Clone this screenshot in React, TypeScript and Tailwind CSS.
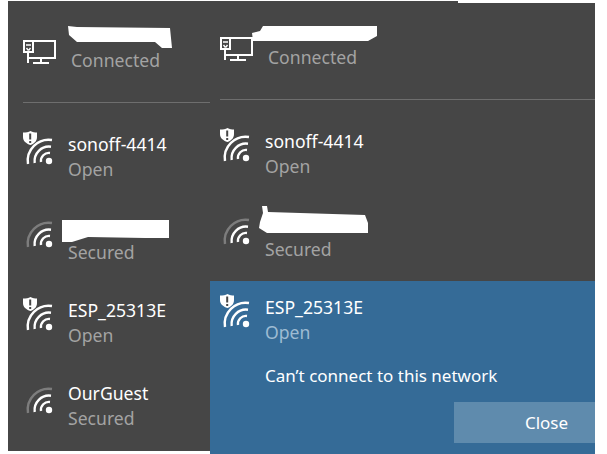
const FONT = "font-['Noto_Sans',sans-serif]";

function WifiIcon({ secured }: { secured?: boolean }) {
  // dot sits at 26,31; arcs run from just below left of it round to just right of the top
  return (
    <svg width="36" height="36" viewBox="0 0 36 36" fill="none" className="shrink-0">
      <path
        d="M5 34 A21 21 0 0 1 29 10"
        stroke={secured ? "#7d7d7d" : "#ffffff"}
        strokeWidth="2.4"
      />
      <path d="M11.7 33 A14.5 14.5 0 0 1 28 16.7" stroke="#ffffff" strokeWidth="2.4" />
      <path d="M18 32 A8 8 0 0 1 27 23" stroke="#ffffff" strokeWidth="2.4" />
      <circle cx="26" cy="31" r="3.2" fill="#ffffff" />
      {!secured && (
        <g transform="translate(0 1)">
          <path d="M0 1.5 C3 1.5 5.5 1 7.5 0 C9.5 1 12 1.5 14 1.5 V6 C14 10 11.5 12.5 7.5 14 C3 12.5 0 10 0 6 Z" fill="#ffffff" />
          <rect x="6.2" y="2.5" width="2" height="6" fill="#464646" />
          <rect x="6.2" y="10" width="2" height="2" fill="#464646" />
        </g>
      )}
    </svg>
  );
}

function MonitorIcon() {
  return (
    <svg width="33" height="24" viewBox="0 0 33 24" fill="none" stroke="#ffffff" strokeWidth="2" className="shrink-0">
      <path d="M10 1 H32 V18 H5" />
      <rect x="1" y="1" width="9" height="11" />
      <path d="M3 5 H8 M3.5 8 L5 10 H6 L7.5 8" strokeWidth="1.4" />
      <path d="M5 12 V23 M18 18 V23 M10 23 H26" />
    </svg>
  );
}

// hand-painted redaction scribble over the network name
function Blob({ w, h, points, className = "" }: { w: number; h: number; points: string; className?: string }) {
  return (
    <svg width={w} height={h} viewBox={`0 0 ${w} ${h}`} className={`block shrink-0 ${className}`}>
      <polygon points={points} fill="#ffffff" />
    </svg>
  );
}

function NetworkRow({
  name,
  status,
  blob,
  subClass = "text-[#a3a3a3]",
  secured,
  className = "",
}: {
  name?: string;
  status: string;
  blob?: React.ReactNode;
  subClass?: string;
  secured?: boolean;
  className?: string;
}) {
  return (
    <div className={`flex items-start gap-[9px] ${className}`}>
      <WifiIcon secured={secured} />
      <div className="pt-[2px]">
        {blob ?? <div className="text-[17.6px] leading-[25px] text-white">{name}</div>}
        <div className={`text-[17.6px] leading-[25px] ${subClass}`}>{status}</div>
      </div>
    </div>
  );
}

export default function App() {
  return (
    <div className={`${FONT} w-[607px] h-[454px] bg-white overflow-hidden flex items-start`}>
      {/* Left flyout */}
      <div className="ml-2 mt-px w-[202px] h-[450px] bg-[#464646] shrink-0">
        <div className="h-[101px] pl-[15px] flex items-start">
          <div className="mt-[39px]">
            <MonitorIcon />
          </div>
          <div className="ml-[12px] mt-[25px]">
            <Blob w={104} h={22} points="0,0 9,1 102,2 104,22 94,22 87,16 9,16 1,9" />
            <div className="ml-[3px] text-[17.6px] leading-[25px] text-[#a3a3a3]">Connected</div>
          </div>
        </div>
        <div className="ml-[15px] h-px bg-[#6e6e6e]" />
        <div className="pl-[15px] pt-[27px]">
          <NetworkRow name="sonoff-4414" status="Open" className="h-[83px]" />
          <NetworkRow
            blob={
              <Blob
                w={107}
                h={22}
                points="0,0 107,0 107,18 83,18 26,17 10,22 0,22"
                className="mt-[5px] -mb-[2px] -ml-[6px]"
              />
            }
            status="Secured"
            secured
            className="h-[83px]"
          />
          <NetworkRow name="ESP_25313E" status="Open" className="h-[83px]" />
          <NetworkRow name="OurGuest" status="Secured" secured />
        </div>
      </div>

      {/* Right flyout */}
      <div className="mt-px w-[385px] h-[453px] bg-[#464646] shrink-0 flex flex-col">
        <div className="h-[2px] ml-[248px] bg-white" />
        <div className="h-[96px] pl-[10px] flex items-start">
          <div className="mt-[34px]">
            <MonitorIcon />
          </div>
          <div className="-ml-[1px] mt-[23px]">
            <Blob w={125} h={15} points="11,0 125,0 125,10 116,15 1,15 0,7 8,5" />
            <div className="ml-[16px] mt-[4px] text-[17.6px] leading-[25px] text-[#a3a3a3]">Connected</div>
          </div>
        </div>
        <div className="ml-[10px] h-px bg-[#6e6e6e]" />
        <div className="pl-[10px] pt-[27px]">
          <NetworkRow name="sonoff-4414" status="Open" className="h-[83px]" />
          <NetworkRow
            blob={
              <Blob
                w={109}
                h={27}
                points="3,0 8,0 9,6 106,9 109,17 109,27 8,27 0,22 1,16 4,7"
                className="-mt-[6px] mb-[4px] -ml-[6px]"
              />
            }
            status="Secured"
            secured
            className="h-[71px]"
          />
        </div>
        <div className="flex-1 bg-[#356b97] pt-[12px] flex flex-col">
          <div className="pl-[10px]">
            <NetworkRow name="ESP_25313E" status="Open" subClass="text-[#9dbbd3]" />
          </div>
          <div className="ml-[55px] mt-[18px] text-[17px] leading-[25px] text-white">Can’t connect to this network</div>
          <div className="mt-[14px] ml-auto w-[141px] h-[41px] bg-[#5f8bad] flex items-center justify-center pl-[44px] text-[17px] text-white">
            Close
          </div>
        </div>
      </div>
    </div>
  );
}
